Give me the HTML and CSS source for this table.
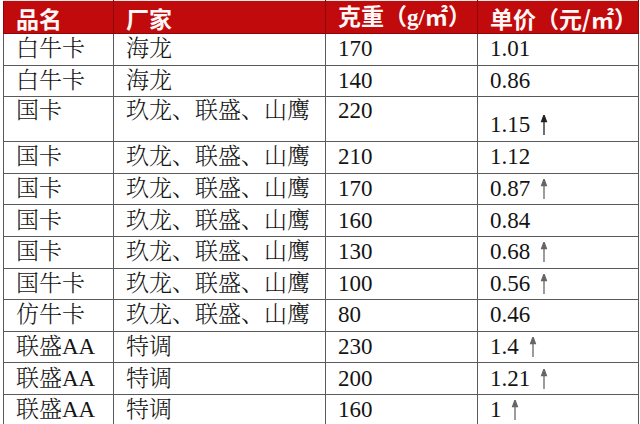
FILE: index.html
```html
<!DOCTYPE html>
<html lang="zh-CN">
<head>
<meta charset="utf-8">
<title>价格表</title>
<link rel="stylesheet" href="styles.css">
</head>
<body>
<table class="price">
  <colgroup>
    <col class="c1"><col class="c2"><col class="c3"><col class="c4">
  </colgroup>
  <thead>
    <tr class="head">
      <th class="h-sans">品名</th>
      <th class="h-sans">厂家</th>
      <th class="h-serif">克重（g/㎡）</th>
      <th class="h-sans">单价（元/㎡）</th>
    </tr>
  </thead>
  <tbody>
    <tr><td>白牛卡</td><td>海龙</td><td>170</td><td>1.01</td></tr>
    <tr><td>白牛卡</td><td>海龙</td><td>140</td><td>0.86</td></tr>
    <tr class="tall"><td>国卡</td><td>玖龙、联盛、山鹰</td><td>220</td><td class="low">1.15 <svg class="up dark" viewBox="0 0 8 20" width="8" height="20"><polygon points="4,0 1.6,6.5 6.4,6.5"/><line x1="4" y1="5" x2="4" y2="20"/></svg></td></tr>
    <tr><td>国卡</td><td>玖龙、联盛、山鹰</td><td>210</td><td>1.12</td></tr>
    <tr><td>国卡</td><td>玖龙、联盛、山鹰</td><td>170</td><td>0.87 <svg class="up" viewBox="0 0 8 20" width="8" height="20"><polygon points="4,0 1.6,6.5 6.4,6.5"/><line x1="4" y1="5" x2="4" y2="20"/></svg></td></tr>
    <tr><td>国卡</td><td>玖龙、联盛、山鹰</td><td>160</td><td>0.84</td></tr>
    <tr><td>国卡</td><td>玖龙、联盛、山鹰</td><td>130</td><td>0.68 <svg class="up" viewBox="0 0 8 20" width="8" height="20"><polygon points="4,0 1.6,6.5 6.4,6.5"/><line x1="4" y1="5" x2="4" y2="20"/></svg></td></tr>
    <tr><td>国牛卡</td><td>玖龙、联盛、山鹰</td><td>100</td><td>0.56 <svg class="up" viewBox="0 0 8 20" width="8" height="20"><polygon points="4,0 1.6,6.5 6.4,6.5"/><line x1="4" y1="5" x2="4" y2="20"/></svg></td></tr>
    <tr><td>仿牛卡</td><td>玖龙、联盛、山鹰</td><td>80</td><td>0.46</td></tr>
    <tr><td>联盛AA</td><td>特调</td><td>230</td><td>1.4 <svg class="up" viewBox="0 0 8 20" width="8" height="20"><polygon points="4,0 1.6,6.5 6.4,6.5"/><line x1="4" y1="5" x2="4" y2="20"/></svg></td></tr>
    <tr><td>联盛AA</td><td>特调</td><td>200</td><td>1.21 <svg class="up" viewBox="0 0 8 20" width="8" height="20"><polygon points="4,0 1.6,6.5 6.4,6.5"/><line x1="4" y1="5" x2="4" y2="20"/></svg></td></tr>
    <tr><td>联盛AA</td><td>特调</td><td>160</td><td>1 <svg class="up" viewBox="0 0 8 20" width="8" height="20"><polygon points="4,0 1.6,6.5 6.4,6.5"/><line x1="4" y1="5" x2="4" y2="20"/></svg></td></tr>
  </tbody>
</table>
</body>
</html>
```
FILE: styles.css
```css
html, body {
  margin: 0;
  padding: 0;
  background: #ffffff;
}

.price {
  margin: 0 0 0 3px;
  border-collapse: collapse;
  table-layout: fixed;
  width: 635px;
  font-family: "Liberation Serif", "Noto Serif CJK SC", "Noto Sans CJK SC", serif;
  font-size: 23px;
  color: #141414;
}

.c1 { width: 110px; }
.c2 { width: 212px; }
.c3 { width: 152px; }
.c4 { width: 161px; }

.price th,
.price td {
  border: 1px solid #5a5a5a;
  padding: 0 0 0 12px;
  text-align: left;
  white-space: nowrap;
  line-height: 26px;
  vertical-align: middle;
}

.price td {
  font-weight: 300;
  height: 30.6px;
}

.head th {
  background: #c10a0c;
  color: #fff8f6;
  height: 31px;
  border-color: #8e0608;
  border-top: 1px solid #e9e9e9;
  font-weight: 700;
  padding-top: 1px;
}

.h-sans {
  font-family: "Noto Sans CJK SC", sans-serif;
  font-weight: 700;
}

.h-serif {
  font-family: "Liberation Serif", "Noto Sans CJK SC", serif;
}

.tall td {
  height: 41px;
  vertical-align: top;
  padding-top: 1px;
}

.tall td.low {
  vertical-align: bottom;
  padding-top: 0;
  padding-bottom: 3px;
}

.up {
  display: inline-block;
  vertical-align: -3px;
  margin-left: 4px;
  fill: #666;
  stroke: #666;
  stroke-width: 1.3;
}

.up.dark {
  fill: #222;
  stroke: #222;
}
```
